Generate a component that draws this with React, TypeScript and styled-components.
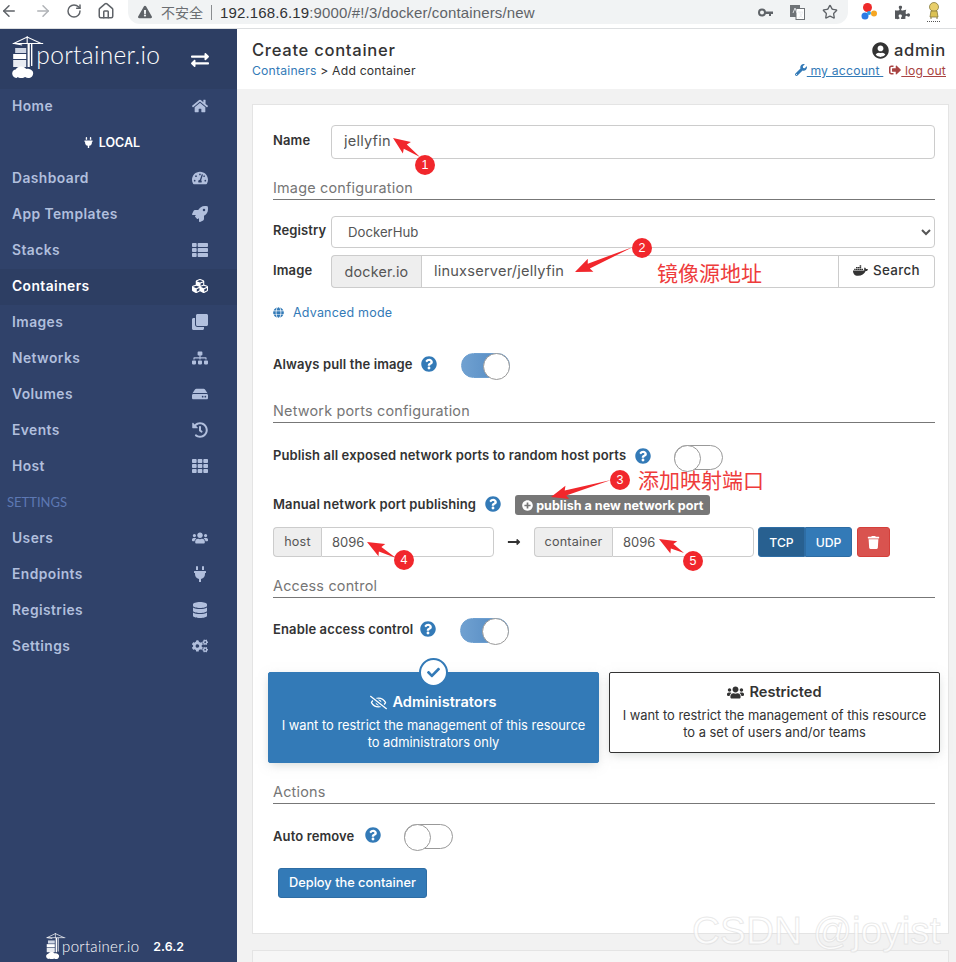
import React from "react";
import styled, { createGlobalStyle } from "styled-components";
import {
  FaHome, FaPlug, FaTachometerAlt, FaRocket, FaThList, FaCubes, FaClone, FaSitemap, FaHdd, FaHistory, FaTh,
  FaUsers, FaDatabase, FaCogs, FaExchangeAlt, FaUserCircle, FaWrench, FaSignOutAlt, FaDocker, FaGlobe,
  FaQuestionCircle, FaPlusCircle, FaLongArrowAltRight, FaTrash, FaCheck, FaRegEyeSlash, FaExclamationTriangle, FaPuzzlePiece,
} from "react-icons/fa";
import { ArrowLeft, ArrowRight, RotateCw, Home as HomeOutline, Star } from "lucide-react";

const UI = `Inter, "Noto Sans", sans-serif`;

const Global = createGlobalStyle`
  html, body { margin: 0; padding: 0; height: 100%; overflow: hidden; background: #f2f2f2; }
  body { font-family: ${UI}; color: #333; }
  * { box-sizing: border-box; }
`;

const Page = styled.div`position: relative; width: 956px; height: 962px; overflow: hidden; display: flex; flex-direction: column;`;

const BrowserBar = styled.div`height: 29px; flex: none; display: flex; background: #fff; border-bottom: 1px solid #dcdee0; padding-left: 0;`;
const NavButtons = styled.div`width: 128px; flex: none; display: flex; align-items: center; height: 21px; padding-left: 0;`;
const NavSlot = styled.span<{ $w: number; $c?: string }>`width: ${p => p.$w}px; display: flex; color: ${p => p.$c || "#5f6368"};`;
const Omnibox = styled.div`width: 720px; height: 24px; flex: none; display: flex; align-items: center; background: #f1f3f4; border-radius: 0 0 12px 12px / 0 0 12px 12px; padding-left: 10px; font-family: "Liberation Sans", "Noto Sans CJK SC", sans-serif; font-size: 15px;`;
const Insecure = styled.span`color: #6b6e72; margin-left: 9px; font-family: "Noto Sans CJK SC", sans-serif; font-size: 14px; line-height: 20px;`;
const Sep = styled.span`width: 1px; height: 15px; background: #8a8d90; margin: 0 8px 0 8px;`;
const UrlHost = styled.span`color: #303235; letter-spacing: 0.14px;`;
const UrlPath = styled.span`color: #5f6368; letter-spacing: 0.14px;`;
const OmniIcons = styled.span`margin-left: auto; display: flex; align-items: center; gap: 17px; padding-right: 10px; color: #5f6368;`;
const ExtIcons = styled.div`display: flex; align-items: center; height: 24px; gap: 16px; margin-left: 13px; color: #55585c;`;

const Body = styled.div`flex: 1; display: flex; min-height: 0;`;

const Sidebar = styled.aside`width: 237px; flex: none; background: #30426a; display: flex; flex-direction: column; position: relative;`;
const Brand = styled.div`height: 60px; background: #2d3e63; display: flex; align-items: center; padding-left: 12px; color: #fff; flex: none;`;
const LogoMark = styled.svg`flex: none; overflow: visible; margin-top: -4px;`;
const BrandName = styled.span<{ $small?: boolean }>`
  font-family: Lato, sans-serif; font-weight: 300; font-size: ${p => (p.$small ? 15 : 24.5)}px; letter-spacing: 0.3px; color: #fff;
  margin-left: ${p => (p.$small ? 1 : 0)}px; margin-top: ${p => (p.$small ? -4 : -9)}px;
`;
const BrandToggle = styled.span`margin-left: auto; margin-right: 28px; display: flex; font-size: 18px; margin-top: 1px;`;
const NavRow = styled.div<{ $active?: boolean }>`
  height: 36px; flex: none; display: flex; align-items: center; justify-content: space-between;
  padding: 0 28px 2px 12px; font-size: 13.8px; font-weight: 600; letter-spacing: 0.45px;
  color: ${p => (p.$active ? "#fff" : "#b1bfdd")};
  background: ${p => (p.$active ? "#2d3e63" : "transparent")};
`;
const NavIcon = styled.span`width: 18px; display: flex; justify-content: center; font-size: 16px;`;
const EndpointTitle = styled.div`height: 36px; flex: none; display: flex; align-items: center; justify-content: center; gap: 5px; font-size: 12.5px; font-weight: 600; color: #fff; padding: 0 14px 2px 0;`;
const SettingsTitle = styled.div`height: 36px; flex: none; display: flex; align-items: center; padding: 0 0 2px 7px; font-family: Lato, sans-serif; font-size: 13px; color: #5d78b3;`;
const SideFooter = styled.div`position: absolute; left: 46px; bottom: 0; height: 28px; display: flex; align-items: center; color: #fff;`;
const Version = styled.span`font-size: 12.4px; font-weight: 600; margin-left: 14px; margin-top: -3px;`;

const Main = styled.main`flex: 1; min-width: 0; display: flex; flex-direction: column;`;
const Header = styled.header`height: 60px; flex: none; background: #fff; display: flex; justify-content: space-between; padding: 11px 10px 0 15px;`;
const HeaderCol = styled.div<{ $right?: boolean }>`display: flex; flex-direction: column; align-items: ${p => (p.$right ? "flex-end" : "flex-start")};`;
const PageTitle = styled.div`font-size: 16.6px; line-height: 20px; font-weight: 500; letter-spacing: 0.7px; color: #333; display: flex; align-items: center; gap: 5px;`;
const Crumbs = styled.div`font-size: 12.2px; line-height: 20px; margin-top: 1px; color: #333; letter-spacing: 0.2px;`;
const CrumbLink = styled.span`color: #337ab7;`;
const UserLinks = styled.div`font-size: 12.2px; line-height: 20px; margin-top: 1px; display: flex; gap: 6px; letter-spacing: 0.2px;`;
const UserLink = styled.span<{ $c: string }>`color: ${p => p.$c}; text-decoration: underline; white-space: pre; svg { vertical-align: -1px; }`;

const Content = styled.div`flex: 1; min-height: 0; padding: 15px 7px 0 15px;`;
const Card = styled.section`height: 830px; background: #fff; border: 1px solid #e4e4e4; padding: 20px 13px 0 20px; display: flex; flex-direction: column;`;
const NextCard = styled.div`height: 40px; margin-top: 16px; background: #f6f6f6; border: 1px solid #e4e4e4;`;

const Row = styled.div<{ $mt: number; $h: number }>`margin-top: ${p => p.$mt}px; height: ${p => p.$h}px; flex: none; display: flex; align-items: center;`;
const FieldLabel = styled.label`width: 58px; flex: none; font-size: 13px; letter-spacing: 0.12px; font-weight: 600; color: #333; margin-bottom: 4px; white-space: nowrap;`;
const InlineLabel = styled.span<{ $up?: number }>`font-size: 13px; letter-spacing: 0.12px; font-weight: 600; color: #333; margin-bottom: ${p => p.$up ?? 2}px; white-space: nowrap;`;
const TextInput = styled.input`flex: 1; min-width: 0; height: 100%; border: 1px solid #ccc; border-radius: 4px; background: #fff; padding: 0 12px 2px; font: 400 14.6px ${UI}; letter-spacing: 0.2px; color: #555; outline: none;`;
const Select = styled.select`flex: 1; height: 100%; border: 1px solid #ccc; border-radius: 4px; background: #fff; padding: 0 12px; font: 400 13.2px ${UI}; color: #555; outline: none;`;
const SectionTitle = styled.div<{ $mt: number }>`margin-top: ${p => p.$mt}px; height: 22px; flex: none; border-bottom: 1px solid #777; font-size: 14.4px; line-height: 20px; color: #767676; letter-spacing: 0.2px;`;

const Group = styled.div<{ $w?: number }>`display: flex; height: 100%; ${p => (p.$w ? `width: ${p.$w}px; flex: none;` : "flex: 1; min-width: 0;")}`;
const Addon = styled.span<{ $w: number; $big?: boolean }>`width: ${p => p.$w}px; flex: none; display: flex; align-items: center; justify-content: center; background: #eee; border: 1px solid #ccc; border-right: 0; border-radius: 4px 0 0 4px; font-size: ${p => (p.$big ? 14.3 : 12.6)}px; color: #555; letter-spacing: 0.2px; padding-bottom: 1px;`;
const GroupInput = styled(TextInput)`border-radius: 0 4px 4px 0; padding: 0 10px; font-size: 13px; letter-spacing: 0;`;
const MiddleInput = styled(TextInput)`border-radius: 0;`;
const SearchBtn = styled.span`width: 96px; flex: none; display: flex; align-items: center; justify-content: center; gap: 5px; border: 1px solid #ccc; border-left: 0; border-radius: 0 4px 4px 0; font-size: 13.4px; font-weight: 500; color: #333; letter-spacing: 0.35px; padding-bottom: 3px;`;
const AdvLink = styled.span`display: flex; align-items: center; gap: 9px; font-size: 12.5px; color: #337ab7; letter-spacing: 0.2px;`;
const Help = styled.span<{ $ml: number; $mr: number }>`display: flex; color: #337ab7; font-size: 16px; margin: -3px ${p => p.$mr}px 0 ${p => p.$ml}px;`;

const Toggle = styled.span<{ $on?: boolean }>`
  position: relative; width: 49px; height: 25px; flex: none; display: block; border-radius: 13px;
  border: 1px solid ${p => (p.$on ? "#6d9fd0" : "#999")};
  background: ${p => (p.$on ? "linear-gradient(90deg,#70a1d1,#4f86bf)" : "#fff")};
  &::after {
    content: ""; position: absolute; top: -1px; ${p => (p.$on ? "right: -1px;" : "left: -1px;")}
    width: 25px; height: 25px; border-radius: 50%; background: #fff; border: 1px solid #999;
  }
`;

const TinyButton = styled.span`display: inline-flex; align-items: center; gap: 3px; height: 20px; width: 195px; flex: none; padding-left: 7px; background: #777; border-radius: 3px; color: #fff; font-size: 12.6px; font-weight: 700; white-space: nowrap;`;
const PortArrow = styled.span`width: 40px; flex: none; display: flex; justify-content: center; color: #333; font-size: 14px;`;
const ProtoGroup = styled.div`display: flex; height: 100%; margin-left: 4px;`;
const Proto = styled.span<{ $active?: boolean }>`
  width: 47px; display: flex; align-items: center; justify-content: center; color: #fff; font-size: 12.2px; font-weight: 500;
  background: ${p => (p.$active ? "#286090" : "#337ab7")}; border: 1px solid #2e6da4;
  border-radius: ${p => (p.$active ? "3px 0 0 3px" : "0 3px 3px 0")};
`;
const Danger = styled.span`width: 33px; margin-left: 5px; height: 100%; display: flex; align-items: center; justify-content: center; background: #d9534f; border: 1px solid #d43f3a; border-radius: 3px; color: #fff; font-size: 13px;`;

const Boxes = styled.div`margin: 29px -5px 0 -5px; display: flex; align-items: flex-start; gap: 10px; flex: none; height: 91px;`;
const Box = styled.div<{ $selected?: boolean }>`
  position: relative; width: 331px; flex: none; height: ${p => (p.$selected ? 91 : 81)}px; border-radius: 2px; display: flex; flex-direction: column; align-items: center;
  padding-top: ${p => (p.$selected ? 20 : 10)}px; box-shadow: 0 3px 10px -2px rgba(161,170,166,.5);
  background: ${p => (p.$selected ? "#337ab7" : "#fff")};
  color: ${p => (p.$selected ? "#fff" : "#333")};
  border: 1px solid ${p => (p.$selected ? "#337ab7" : "#333")};
`;
const BoxTitle = styled.div`display: flex; align-items: center; gap: 5px; font-size: 14.6px; font-weight: 600; line-height: 18px;`;
const BoxText = styled.div`margin-top: 6px; font-size: 12.9px; line-height: 17px; text-align: center; white-space: nowrap;`;
const CheckBadge = styled.span`position: absolute; left: 150px; top: -15px; width: 29px; height: 29px; border-radius: 50%; background: #fff; border: 2px solid #337ab7; color: #337ab7; display: flex; align-items: center; justify-content: center; font-size: 13px;`;
const Primary = styled.span`margin: 19px 0 0 5px; width: 149px; height: 30px; flex: none; display: flex; align-items: center; justify-content: center; background: #337ab7; border: 1px solid #2e6da4; border-radius: 3px; color: #fff; font-size: 12.8px; font-weight: 500; padding-bottom: 1px;`;

const Overlay = styled.svg`position: absolute; left: 0; top: 0; pointer-events: none;`;
const Pin = styled.span<{ $x: number; $y: number }>`position: absolute; left: ${p => p.$x - 10}px; top: ${p => p.$y - 10}px; width: 20px; height: 20px; border-radius: 50%; background: #f1272c; color: #fff; display: flex; align-items: center; justify-content: center; font: 400 12.5px "Liberation Sans", sans-serif;`;
const Note = styled.span<{ $x: number; $y: number }>`position: absolute; left: ${p => p.$x}px; top: ${p => p.$y}px; font: 400 21px/28px "Noto Sans CJK SC", sans-serif; color: #ee3b3b; white-space: nowrap;`;
const Watermark = styled.span`position: absolute; left: 692px; top: 908px; font: 400 38.8px/46px "Liberation Sans", sans-serif; color: rgba(255,255,255,.75); -webkit-text-stroke: 1px rgba(215,215,215,.55); white-space: nowrap;`;

const Logo = ({ h }: { h: number }) => (
  <LogoMark width={h * 0.58} height={h} viewBox="0 0 24 42" fill="none">
    <g stroke="#fff" strokeWidth="1.1">
      <path d="M0.5 7.5H31M1.5 7.5L15 1L29 7.5M15 0V8M2 7.5L10 9" />
      <path d="M16.5 8V31" strokeWidth="2.2" />
      <path d="M19.5 8V30" strokeWidth="1.4" />
    </g>
    <rect x="3" y="12" width="11" height="5" fill="#cfd6e4" />
    <rect x="1" y="18" width="13" height="5" fill="#fff" />
    <rect x="1" y="24" width="13" height="7" fill="#e9ecf2" />
    <path d="M5 42c-3 0-5-2-5-4.500c0-2.500 2-4 3.500-4c1-2 3-3 5.500-3c2.500 0 4 1 5 2.500c1-.5 2-.5 3 0c2 .5 4 2 4 4c0 3-2 5-5 5c-1 0-2-.5-3-1c-1 .5-2 1-4 1c-1.500 0-3-.5-4-1z" fill="#fff" />
  </LogoMark>
);

const Arrow = ({ tip, tail }: { tip: [number, number]; tail: [number, number] }) => {
  const [x1, y1] = tip, [x2, y2] = tail;
  const len = Math.hypot(x2 - x1, y2 - y1);
  const ux = (x2 - x1) / len, uy = (y2 - y1) / len, nx = -uy, ny = ux;
  const at = (d: number, w: number) => `${x1 + ux * d + nx * w},${y1 + uy * d + ny * w}`;
  const pts = [at(0, 0), at(17, 7), at(15, 2.6), tail.join(","), at(15, -2.6), at(17, -7)].join(" ");
  return <polygon points={pts} fill="#f1272c" />;
};

const navTop = [
  { label: "Dashboard", icon: <FaTachometerAlt /> },
  { label: "App Templates", icon: <FaRocket /> },
  { label: "Stacks", icon: <FaThList /> },
  { label: "Containers", icon: <FaCubes />, active: true },
  { label: "Images", icon: <FaClone /> },
  { label: "Networks", icon: <FaSitemap /> },
  { label: "Volumes", icon: <FaHdd /> },
  { label: "Events", icon: <FaHistory /> },
  { label: "Host", icon: <FaTh /> },
];
const navBottom = [
  { label: "Users", icon: <FaUsers /> },
  { label: "Endpoints", icon: <FaPlug /> },
  { label: "Registries", icon: <FaDatabase /> },
  { label: "Settings", icon: <FaCogs /> },
];

export default function App() {
  return (
    <Page>
      <Global />
      <BrowserBar>
        <NavButtons>
          <NavSlot $w={34}><ArrowLeft size={18} strokeWidth={2} /></NavSlot>
          <NavSlot $w={32} $c="#b0b3b7"><ArrowRight size={18} strokeWidth={2} /></NavSlot>
          <NavSlot $w={31}><RotateCw size={16} strokeWidth={2.2} /></NavSlot>
          <NavSlot $w={30}><HomeOutline size={18} strokeWidth={2} /></NavSlot>
        </NavButtons>
        <Omnibox>
          <FaExclamationTriangle size={14} color="#5f6368" />
          <Insecure>不安全</Insecure>
          <Sep />
          <UrlHost>192.168.6.19</UrlHost>
          <UrlPath>:9000/#!/3/docker/containers/new</UrlPath>
          <OmniIcons>
            <svg width="15" height="9" viewBox="0 0 15 9" fill="none">
              <circle cx="4" cy="4.500" r="3" stroke="#5f6368" strokeWidth="2" />
              <path d="M7 3.500h8v2.500h-2v2h-2v-2H7z" fill="#5f6368" />
            </svg>
            <svg width="15" height="15" viewBox="0 0 15 15">
              <rect x="0.500" y="0.500" width="9" height="11" fill="#6f7377" stroke="#6f7377" />
              <rect x="6" y="3.500" width="8.500" height="11" fill="#fff" stroke="#6f7377" />
              <path d="M3 8l2-5 2 5M8 7h5M10 7c0 3 1 5 3 6M12.500 7c0 2-2 5-4 6" stroke="#e8eaed" strokeWidth="0.900" fill="none" />
            </svg>
            <Star size={16} strokeWidth={2} />
          </OmniIcons>
        </Omnibox>
        <ExtIcons>
          <svg width="18" height="20" viewBox="0 0 18 20">
            <circle cx="6.500" cy="5.500" r="4.500" fill="#ee2a2a" />
            <circle cx="4" cy="14" r="3.500" fill="#2c7be5" />
            <circle cx="13" cy="11.500" r="3" fill="#f5a623" />
            <circle cx="8" cy="11" r="2" fill="#2c9be5" />
          </svg>
          <FaPuzzlePiece size={15} />
          <svg width="16" height="20" viewBox="0 0 16 20">
            <circle cx="8" cy="5" r="4.500" fill="#e9cf6a" stroke="#857a3c" strokeWidth="0.800" />
            <path d="M5 9h6l1 6H4z" fill="#dcc253" stroke="#857a3c" strokeWidth="0.800" />
            <path d="M5 15v2M11 15v2" stroke="#857a3c" />
            <path d="M1 19.500h14" stroke="#555" strokeDasharray="1 1" />
          </svg>
        </ExtIcons>
      </BrowserBar>

      <Body>
        <Sidebar>
          <Brand>
            <Logo h={42} />
            <BrandName>portainer.io</BrandName>
            <BrandToggle><FaExchangeAlt /></BrandToggle>
          </Brand>
          <NavRow><span>Home</span><NavIcon><FaHome /></NavIcon></NavRow>
          <EndpointTitle><FaPlug size={11} />LOCAL</EndpointTitle>
          {navTop.map(n => (
            <NavRow key={n.label} $active={n.active}><span>{n.label}</span><NavIcon>{n.icon}</NavIcon></NavRow>
          ))}
          <SettingsTitle>SETTINGS</SettingsTitle>
          {navBottom.map(n => (
            <NavRow key={n.label}><span>{n.label}</span><NavIcon>{n.icon}</NavIcon></NavRow>
          ))}
          <SideFooter>
            <Logo h={26} />
            <BrandName $small>portainer.io</BrandName>
            <Version>2.6.2</Version>
          </SideFooter>
        </Sidebar>

        <Main>
          <Header>
            <HeaderCol>
              <PageTitle>Create container</PageTitle>
              <Crumbs><CrumbLink>Containers</CrumbLink> &gt; Add container</Crumbs>
            </HeaderCol>
            <HeaderCol $right>
              <PageTitle><FaUserCircle size={17} />admin</PageTitle>
              <UserLinks>
                <UserLink $c="#337ab7"><FaWrench size={12} /> my account </UserLink>
                <UserLink $c="#a94442"><FaSignOutAlt size={12} /> log out</UserLink>
              </UserLinks>
            </HeaderCol>
          </Header>
          <Content>
            <Card>
              <Row $mt={0} $h={34}>
                <FieldLabel>Name</FieldLabel>
                <TextInput defaultValue="jellyfin" readOnly />
              </Row>
              <SectionTitle $mt={19}>Image configuration</SectionTitle>
              <Row $mt={16} $h={32}>
                <FieldLabel>Registry</FieldLabel>
                <Select defaultValue="DockerHub"><option>DockerHub</option></Select>
              </Row>
              <Row $mt={7} $h={33}>
                <FieldLabel>Image</FieldLabel>
                <Group>
                  <Addon $w={90} $big>docker.io</Addon>
                  <MiddleInput defaultValue="linuxserver/jellyfin" readOnly />
                  <SearchBtn><FaDocker size={15} />Search</SearchBtn>
                </Group>
              </Row>
              <Row $mt={14} $h={20}>
                <AdvLink><FaGlobe size={11} />Advanced mode</AdvLink>
              </Row>
              <Row $mt={30} $h={26}>
                <InlineLabel>Always pull the image</InlineLabel>
                <Help $ml={8} $mr={24}><FaQuestionCircle /></Help>
                <Toggle $on />
              </Row>
              <SectionTitle $mt={23}>Network ports configuration</SectionTitle>
              <Row $mt={21} $h={26}>
                <InlineLabel $up={4}>Publish all exposed network ports to random host ports</InlineLabel>
                <Help $ml={9} $mr={23}><FaQuestionCircle /></Help>
                <Toggle />
              </Row>
              <Row $mt={25} $h={20}>
                <InlineLabel>Manual network port publishing</InlineLabel>
                <Help $ml={9} $mr={14}><FaQuestionCircle /></Help>
                <TinyButton><FaPlusCircle size={11} />publish a new network port</TinyButton>
              </Row>
              <Row $mt={12} $h={30}>
                <Group $w={221}>
                  <Addon $w={48}>host</Addon>
                  <GroupInput defaultValue="8096" readOnly />
                </Group>
                <PortArrow><FaLongArrowAltRight /></PortArrow>
                <Group $w={220}>
                  <Addon $w={78}>container</Addon>
                  <GroupInput defaultValue="8096" readOnly />
                </Group>
                <ProtoGroup>
                  <Proto $active>TCP</Proto>
                  <Proto>UDP</Proto>
                </ProtoGroup>
                <Danger><FaTrash /></Danger>
              </Row>
              <SectionTitle $mt={19}>Access control</SectionTitle>
              <Row $mt={19} $h={26}>
                <InlineLabel>Enable access control</InlineLabel>
                <Help $ml={7} $mr={24}><FaQuestionCircle /></Help>
                <Toggle $on />
              </Row>
              <Boxes>
                <Box $selected>
                  <CheckBadge><FaCheck /></CheckBadge>
                  <BoxTitle><FaRegEyeSlash size={17} />Administrators</BoxTitle>
                  <BoxText>I want to restrict the management of this resource<br />to administrators only</BoxText>
                </Box>
                <Box>
                  <BoxTitle><FaUsers size={17} />Restricted</BoxTitle>
                  <BoxText>I want to restrict the management of this resource<br />to a set of users and/or teams</BoxText>
                </Box>
              </Boxes>
              <SectionTitle $mt={19}>Actions</SectionTitle>
              <Row $mt={20} $h={25}>
                <InlineLabel>Auto remove</InlineLabel>
                <Help $ml={11} $mr={23}><FaQuestionCircle /></Help>
                <Toggle />
              </Row>
              <Primary>Deploy the container</Primary>
            </Card>
            <NextCard />
          </Content>
        </Main>
      </Body>

      <Overlay width="956" height="962" viewBox="0 0 956 962">
        <Arrow tip={[393, 138]} tail={[420, 157]} />
        <Arrow tip={[575, 272]} tail={[633, 247]} />
        <Arrow tip={[551, 497]} tail={[611, 480]} />
        <Arrow tip={[367, 542]} tail={[396, 558]} />
        <Arrow tip={[659, 539]} tail={[684, 553]} />
      </Overlay>
      <Pin $x={425} $y={165}>1</Pin>
      <Pin $x={642} $y={248}>2</Pin>
      <Pin $x={620} $y={480}>3</Pin>
      <Pin $x={404} $y={560}>4</Pin>
      <Pin $x={693} $y={561}>5</Pin>
      <Note $x={657} $y={258}>镜像源地址</Note>
      <Note $x={638} $y={465}>添加映射端口</Note>
      <Watermark>CSDN @joyist</Watermark>
    </Page>
  );
}
